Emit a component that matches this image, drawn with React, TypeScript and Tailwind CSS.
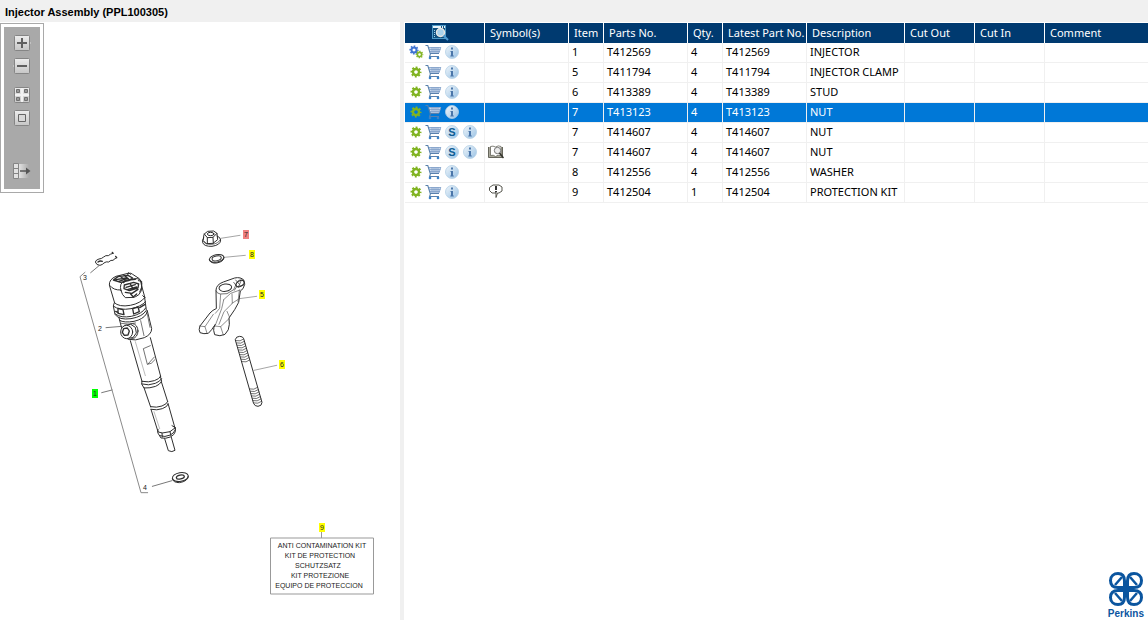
import type { ReactNode } from "react";

type Part = {
  item: string;
  partNo: string;
  qty: string;
  description: string;
  symbol?: "book" | "note";
  assembly?: boolean;
  service?: boolean;
  selected?: boolean;
};

const parts: Part[] = [
  { item: "1", partNo: "T412569", qty: "4", description: "INJECTOR", assembly: true },
  { item: "5", partNo: "T411794", qty: "4", description: "INJECTOR CLAMP" },
  { item: "6", partNo: "T413389", qty: "4", description: "STUD" },
  { item: "7", partNo: "T413123", qty: "4", description: "NUT", selected: true },
  { item: "7", partNo: "T414607", qty: "4", description: "NUT", service: true },
  { item: "7", partNo: "T414607", qty: "4", description: "NUT", service: true, symbol: "book" },
  { item: "8", partNo: "T412556", qty: "4", description: "WASHER" },
  { item: "9", partNo: "T412504", qty: "1", description: "PROTECTION KIT", symbol: "note" },
];

const columns: { name: string; width: string }[] = [
  { name: "Symbol(s)", width: "w-[84px]" },
  { name: "Item", width: "w-[35px]" },
  { name: "Parts No.", width: "w-[84px]" },
  { name: "Qty.", width: "w-[35px]" },
  { name: "Latest Part No.", width: "w-[84px]" },
  { name: "Description", width: "w-[98px]" },
  { name: "Cut Out", width: "w-[70px]" },
  { name: "Cut In", width: "w-[70px]" },
  { name: "Comment", width: "w-auto" },
];

const kitLines = [
  { text: "ANTI CONTAMINATION KIT", x: 322, y: 548 },
  { text: "KIT DE PROTECTION", x: 320, y: 558 },
  { text: "SCHUTZSATZ", x: 318, y: 568 },
  { text: "KIT PROTEZIONE", x: 320, y: 578 },
  { text: "EQUIPO DE PROTECCION", x: 319, y: 588 },
];

const callouts = [
  { n: "1", x: 92, y: 389, fill: "#00ff00" },
  { n: "7", x: 243, y: 230, fill: "#f08080" },
  { n: "8", x: 249, y: 250, fill: "#ffff00" },
  { n: "5", x: 259, y: 290, fill: "#ffff00" },
  { n: "6", x: 279, y: 360, fill: "#ffff00" },
  { n: "9", x: 319, y: 523, fill: "#ffff00" },
];

const GearShape = ({ color }: { color: string }) => (
  <>
    <circle r="3" fill="none" stroke={color} strokeWidth="2.4" />
    <circle r="4.6" fill="none" stroke={color} strokeWidth="1.8" strokeDasharray="1.9 1.71" strokeDashoffset="0.9" />
  </>
);

const GearIcon = ({ assembly }: { assembly?: boolean }) => (
  <svg width="16" height="16" viewBox="0 0 16 16" className="shrink-0">
    {assembly ? (
      <>
        <g transform="translate(6 6) scale(.84)">
          <GearShape color="#3f74d1" />
        </g>
        <g transform="translate(11.500 10.500) scale(.7)">
          <GearShape color="#84b526" />
        </g>
      </>
    ) : (
      <g transform="translate(8 8)">
        <GearShape color="#80b321" />
      </g>
    )}
  </svg>
);

const CartIcon = () => (
  <svg width="17" height="16" viewBox="0 0 17 16">
    <path d="M3.500 3h12.500l-2 6H5.500z" fill="#c8d8ec" />
    <path d="M3.500 3.500h12.500M4.500 5.500h11M5 7.500h10M7 3v6M9 3v6M11 3v6M13 3v6M15.800 3.500l-1.800 5.500" stroke="#7c9cc6" strokeWidth=".7" fill="none" />
    <path d="M.5 1.500h2.300l2.600 8.500-.8 2.500h9.400M5.300 9.500h8.700" stroke="#5880ad" strokeWidth="1.100" fill="none" />
    <circle cx="5" cy="14" r="1.300" fill="#3b82c8" />
    <circle cx="13" cy="14" r="1.300" fill="#3b82c8" />
  </svg>
);

const RoundIcon = ({ letter }: { letter: "i" | "S" }) => (
  <svg width="14" height="14" viewBox="0 0 14 14">
    <defs>
      <linearGradient id="disc" x1="0" y1="0" x2="1" y2="1">
        <stop offset="0" stopColor="#f2f7fb" />
        <stop offset="1" stopColor="#98c1e4" />
      </linearGradient>
    </defs>
    <circle cx="7" cy="7" r="6.500" fill="url(#disc)" stroke="#b3cfe6" strokeWidth=".8" />
    {letter === "i" ? (
      <path d="M6 2.500h2v2H6zM5.500 6H8v4.500h.8v1H5.300v-1H6V7h-.5z" fill="#4a76aa" />
    ) : (
      <text x="7" y="11" textAnchor="middle" fontSize="11" fontWeight="700" fill="#0d5c94" fontFamily="Liberation Sans, sans-serif">
        S
      </text>
    )}
  </svg>
);

const SearchIcon = () => (
  <svg width="17" height="16" viewBox="0 0 17 16">
    <rect x=".5" y=".5" width="13" height="13" fill="#10507f" stroke="#4f9bc8" />
    <path d="M1 2h12" stroke="#e8f4fb" strokeWidth="2" strokeDasharray="8 1 1 1" />
    <path d="M2.500 5v8" stroke="#9fd0ec" strokeDasharray="1 1" />
    <circle cx="8.500" cy="7.500" r="4" fill="#a9d2ec" stroke="#e9e6e2" strokeWidth="1.500" />
    <path d="M11.500 10.500l4.500 4.500" stroke="#4d9bd4" strokeWidth="2" />
  </svg>
);

const BookIcon = () => (
  <svg width="16" height="14" viewBox="0 0 16 14" fill="none">
    <path d="M.5 2v10.500h14V2" fill="#aaa99c" stroke="#66665c" />
    <path d="M2.500 1.500q2.500-1 5 .5 3-2 5.500-.5v9q-3-1-5.500 1-2-2-5-1z" fill="#fff" stroke="#66665c" strokeWidth=".8" />
    <circle cx="9.500" cy="5.500" r="3.200" fill="#ececec" stroke="#777" />
    <path d="M11.500 8l4 5" stroke="#33332c" strokeWidth="1.500" />
  </svg>
);

const NoteIcon = () => (
  <svg width="16" height="15" viewBox="0 0 16 15" fill="none">
    <path d="M5 1h6l3 2v4l-3 2H9.500L8 13.500V9H4L1.500 6.500V3.500z" fill="#fff" stroke="#55554c" />
    <path d="M8 2v4M8 7v1.500" stroke="#111" strokeWidth="1.700" />
  </svg>
);

const ToolButton = ({ label, className = "", children }: { label: string; className?: string; children: ReactNode }) => (
  <button type="button" aria-label={label} title={label} className={`block h-4 w-[18px] ${className}`}>
    <svg width="18" height="16" viewBox="0 0 18 16">
      <defs>
        <linearGradient id="face" x1="0" y1="0" x2="0" y2="1">
          <stop offset="0" stopColor="#ededed" />
          <stop offset="1" stopColor="#c6c6c6" />
        </linearGradient>
      </defs>
      {children}
    </svg>
  </button>
);

const Face = () => <rect x="1.500" y=".5" width="15" height="15" rx="1" fill="url(#face)" stroke="#858585" />;

const Toolbar = () => (
  <div className="w-[44px] border border-[#a9a9a9] p-[3px]">
    <div className="flex flex-col items-center bg-[#a9a9a9] pt-2 pb-[10px]">
      <ToolButton label="Zoom in">
        <path d="M15 5l3 3-3 3z" fill="#dedede" />
        <Face />
        <path d="M4 8h10M9 3v10" stroke="#606060" strokeWidth="2" />
      </ToolButton>
      <ToolButton label="Zoom out" className="mt-[7px]">
        <path d="M3 5L0 8l3 3z" fill="#dedede" />
        <Face />
        <path d="M4 8h10" stroke="#606060" strokeWidth="2" />
      </ToolButton>
      <ToolButton label="Tile" className="mt-[13px]">
        <Face />
        <path d="M9 1v14M2 8h14" stroke="#f2f2f2" strokeWidth="2" />
        <path d="M3.500 2.500h3v3h-3zM11.500 2.500h3v3h-3zM3.500 10.500h3v3h-3zM11.500 10.500h3v3h-3z" fill="#9a9a9a" stroke="#707070" />
      </ToolButton>
      <ToolButton label="Fit to window" className="mt-[7px]">
        <Face />
        <path d="M5.500 4.500h7v7h-7z" fill="#d9d9d9" stroke="#666" />
      </ToolButton>
      <ToolButton label="Hide panel" className="mt-[37px]">
        <defs>
          <linearGradient id="fade">
            <stop offset="0" stopColor="#e2e2e2" />
            <stop offset="1" stopColor="#a9a9a9" />
          </linearGradient>
        </defs>
        <path d="M6 1h10v14H6z" fill="url(#fade)" />
        <path d="M.5.500h5v15h-5z" fill="#e2e2e2" stroke="#858585" />
        <path d="M1 5.500h4M1 10.500h4" stroke="#858585" />
        <path d="M7 8h8" stroke="#555" strokeWidth="1.500" />
        <path d="M13 4.500L17.500 8 13 11.500z" fill="#555" />
      </ToolButton>
    </div>
  </div>
);

const Illustration = () => (
  <svg width="400" height="427" viewBox="0 193 400 427" className="block" fontFamily="Liberation Sans, Arial, sans-serif" fontSize="7" fill="#222">
    {/* Injector with clip and seat washer */}
    <g transform="translate(70 240) scale(.33333)" fill="none" stroke="#2e2e2e" strokeWidth="3" strokeLinejoin="round" strokeLinecap="round">
      <path d="M45 97L30 110 213 758h20" stroke="#8a8a8a" />
      <path d="M62 98l24-20M108 263l48-4M95 458l31-8M247 739l59-17" stroke="#777" />
      <path d="M129 40q-9 2-14 7-8-2-14 4-7 6-14 6-9 2-11 9 3 10 14 10 8-2 12-7 6-5 14-3 7-7 13-5 6-6 11-8" />
      <path d="M84 66q6-5 13-2M129 40l-2-3M140 53l-3-4" strokeWidth="4" />
      {/* connector cap */}
      <path d="M118 134q-1-16 20-25l36-9q10-2 14 3l20 13q5 5 6 18l11 40q-20 17-50 22-27 4-40-6z" fill="#fff" />
      <path d="M120 137q10 14 32 13M153 152q-7-23 12-30l30-6q17-2 20 14l-1 22q-5 14-20 20l-28 1q-10-8-13-21z" />
      <path d="M130 120l14-10 30-4 14 8-12 8-24 5zM138 119l30-5M150 108l15 13M162 106l14 11M146 124l28-9" strokeWidth="4" />
      <path d="M163 135l28-8 15 5-2 12-26 8-16-6zM168 142l28-8M172 149l28-8M180 130l10 18M166 157l20 3 18-12M182 162l8 9 10-9M160 128l8-7 28-3" strokeWidth="4" />
      <path d="M173 105l2-7 7 5M205 122l10 2v18l-6 14" />
      {/* collar */}
      <path d="M133 188l-3 10 5 25q12 18 48 13 35-6 46-25l-5-38-6-6" fill="#fff" />
      <path d="M133 188q14 14 48 8 31-6 44-24M131 199q17 13 52 7 30-6 44-21M136 222q17 13 48 7 32-7 43-25" />
      <path d="M144 205l15 4 3 15-18-4zM188 206l16-5 4 14-17 7zM137 214l8 4M209 203l15-9" strokeWidth="4" />
      <path d="M147 233l2 8q13 8 43 3 27-6 37-22l3-10M149 241l7 28M232 213l13 53q0 17-22 27-27 11-49 5" />
      <path d="M153 250q20 5 44-1M212 242l10 45M232 222l8 40" stroke="#777" />
      {/* inlet fitting */}
      <ellipse cx="188" cy="273" rx="16" ry="22" fill="#fff" />
      <path d="M164 256l18-3 14 9 3 17-10 14-18 2z" fill="#fff" />
      <ellipse cx="170" cy="276" rx="18" ry="20" fill="#fff" />
      <path d="M161 266l11-2 6 9-4 12-11 1-6-9z" strokeWidth="4" />
      {/* barrel */}
      <path d="M181 302l35 122M241 293l31 116" />
      <path d="M196 305l30 102" stroke="#bbb" />
      <path d="M241 317l-21 9 12 47q12 1 23-14M234 372l19-21" strokeWidth="2" />
      <path d="M216 424l-1 8 7 12q18 1 35-5 12-5 18-15l-4-15M216 424q20 4 37-2 15-5 19-13M216 432q20 6 40-2 15-6 19-14" />
      <path d="M222 443l20 58M274 425l19 60M242 500q18 4 34-2 15-6 17-13M243 508q18 4 34-2 16-6 17-13M243 508l21 67M294 490l22 78" />
      <path d="M264 568l-1 10 10 16q14 3 28-3 12-6 15-16v-12l-10-6M265 576l12 3 23-4 16-12M269 587q16 6 32-2 10-5 14-14M276 579l1 12M300 575l3 13" />
      <path d="M284 596l11 36q11 6 20-1l-11-39" />
      <path d="M252 515l17 51" stroke="#bbb" />
      <ellipse cx="331" cy="711" rx="24" ry="13" transform="rotate(-10 331 711)" />
      <path d="M307 716q2 12 21 12 26-4 27-19" />
      <ellipse cx="331" cy="711" rx="12" ry="6" transform="rotate(-12 331 711)" strokeWidth="4" />
    </g>

    {/* Nut, washer, clamp and stud */}
    <g transform="translate(190 220) scale(.33333)" fill="none" stroke="#2e2e2e" strokeWidth="3" strokeLinejoin="round" strokeLinecap="round">
      <path d="M92 55l58-9M103 112l63-6M148 236l52-7M192 451l68-15" stroke="#777" strokeWidth="2" />
      <path d="M41 54q-5 7-3 14 5 12 28 11 26-4 26-19-1-9-11-12" fill="#fff" />
      <path d="M43 42l10-8 18-1 10 7 2 19-14 11-20 1-9-9zM43 42l9 11 17-1 12-12M52 53v18M69 52l1 18" />
      <ellipse cx="62" cy="42" rx="10" ry="5" />
      <path d="M38 63q9 12 28 10 19-2 25-14" strokeWidth="2" />
      <ellipse cx="80" cy="115" rx="22" ry="11" transform="rotate(-12 80 115)" />
      <ellipse cx="80" cy="115" rx="14" ry="7" transform="rotate(-12 80 115)" />
      <path d="M58 120q4 11 22 9 22-4 22-16" />
      {/* clamp */}
      <path d="M78 210q0-16 22-24l34-12q18-4 28 7 6 11-3 25l-8 7-5 34-12 22-17 25 1 19q0 18-13 30-15 8-31 1l-3-13q-1-8 5-18-12 19-21 27-14 3-25-2-5-9 0-20l30-39q8-9 18-13z" fill="#fff" />
      <ellipse cx="106" cy="203" rx="19" ry="11" transform="rotate(-8 106 203)" />
      <path d="M78 212q2 9 13 10l20-1 20-12 11-24q5-8 19-4" strokeWidth="2" />
      <ellipse cx="150" cy="191" rx="13" ry="8" transform="rotate(-30 150 191)" />
      <path d="M131 187l10 13 20-5M141 199l-8 12M137 180l11 13M153 183l-8 19" strokeWidth="2" />
      <path d="M92 223l-3 42-13 15M100 240l22-20 28-10M101 240l-6 26-18 47M126 222l1 28-25 25-15 38M126 250l22-14M118 290l-7-16M28 318l17 2 25-37M45 320l6 20M74 318l18 2 25-24M92 320l8 25M148 210l-4 36" stroke="#555" strokeWidth="2" />
      {/* stud */}
      <path d="M136 358q2-9 13-9 10 0 12 7l55 191q0 11-12 12-10 0-13-8z" fill="#fff" />
      <path d="M138 362q13 4 23-5M140 369q13 4 23-5M142 376q13 4 23-5M144 383q13 4 23-5M146 390q13 4 23-5M148 397q13 4 23-5M150 404q13 4 23-5M152 411q13 4 23-5M154 418q13 4 23-5M156 425q13 4 23-5M179 507q13 4 24-5M181 514q13 4 24-5M183 521q13 4 24-5M185 528q13 4 24-5M187 535q13 4 24-5M189 542q13 4 24-5M191 549q13 4 24-5" strokeWidth="2" />
    </g>

    <text x="83" y="280">3</text>
    <text x="98" y="331">2</text>
    <text x="143" y="490">4</text>
    {callouts.map((c) => (
      <g key={c.n}>
        <rect x={c.x} y={c.y} width="6" height="9" fill={c.fill} />
        <text x={c.x + 3} y={c.y + 7} textAnchor="middle">
          {c.n}
        </text>
      </g>
    ))}

    <path d="M321.500 532v6M270.500 538h103v56h-103z" fill="none" stroke="#999" />
    {kitLines.map((line) => (
      <text key={line.text} x={line.x} y={line.y} textAnchor="middle">
        {line.text}
      </text>
    ))}
  </svg>
);

const Logo = () => (
  <div className="mt-auto mr-1 flex flex-col items-center gap-px self-end text-[#0b559f]">
    <svg width="36" height="36" viewBox="0 0 36 36" fill="none" stroke="currentColor" strokeWidth="3">
      <path d="M16.500 16V10C16.500 5 14 2.500 10 2.500S2.500 5 2.500 9.500 5 16.500 10 16.500h16c5 0 7.500-2.500 7.500-7S30 2.500 26 2.500 19.500 5 19.500 10v16c0 5 2.500 7.500 6.500 7.500s7.500-2.500 7.500-7-2.500-7-7.500-7H10c-5 0-7.500 2.500-7.500 7s3.500 7 7.500 7 6.500-2.500 6.500-7.500V16" />
      <path d="M7 14l7-8M29 14l-7-8M7 22l7 8M29 22l-7 8" strokeWidth="2.500" />
    </svg>
    <span className="font-['Liberation_Sans',Arial,sans-serif] text-[10px] leading-3 font-bold">Perkins</span>
  </div>
);

const PartRow = ({ part }: { part: Part }) => {
  const cell = "h-5 border-r border-b border-[#f0f0f0] pb-[2px] pl-[3px] last:border-r-0";
  return (
    <tr className={part.selected ? "bg-[#0078d7] text-white" : "text-black"}>
      <td className={cell}>
        <div className="flex h-4 items-center">
          <GearIcon assembly={part.assembly} />
          <button type="button" aria-label="Add to cart" className="ml-px">
            <CartIcon />
          </button>
          {part.service && (
            <button type="button" aria-label="Service" className="ml-[3px]">
              <RoundIcon letter="S" />
            </button>
          )}
          <button type="button" aria-label="Information" className={part.service ? "ml-1" : "ml-[3px]"}>
            <RoundIcon letter="i" />
          </button>
        </div>
      </td>
      <td className={cell}>
        {part.symbol === "book" && <BookIcon />}
        {part.symbol === "note" && <NoteIcon />}
      </td>
      <td className={cell}>{part.item}</td>
      <td className={cell}>{part.partNo}</td>
      <td className={cell}>{part.qty}</td>
      <td className={cell}>{part.partNo}</td>
      <td className={cell}>{part.description}</td>
      <td className={cell}></td>
      <td className={cell}></td>
      <td className={cell}></td>
    </tr>
  );
};

const App = () => {
  return (
    <div className="flex min-h-screen flex-col bg-white font-['Noto_Sans','Open_Sans',sans-serif] text-[11px] leading-4 text-black">
      <header className="bg-[#f0f0f0] px-[5px] pt-1 pb-[2px]">
        <h1 className="font-['Liberation_Sans',Arial,sans-serif] font-bold">Injector Assembly (PPL100305)</h1>
      </header>
      <main className="flex grow">
        {/* Drawing */}
        <section className="w-[400px] shrink-0 pt-px">
          <Toolbar />
          <Illustration />
        </section>
        <div className="w-1 shrink-0 bg-[#f0f0f0]"></div>
        {/* Parts list */}
        <section className="flex min-w-0 grow flex-col pt-px pl-px">
          <table className="w-full table-fixed border-separate border-spacing-0 whitespace-nowrap">
            <thead>
              <tr className="bg-[#003a70] text-white">
                <th className="h-5 w-[80px] border-r border-white">
                  <button type="button" aria-label="Search" className="mx-auto block pr-2">
                    <SearchIcon />
                  </button>
                </th>
                {columns.map((col) => (
                  <th key={col.name} className={`h-5 border-r border-white pl-[5px] text-left font-normal last:border-r-0 ${col.width}`}>
                    {col.name}
                  </th>
                ))}
              </tr>
            </thead>
            <tbody>
              {parts.map((part, index) => (
                <PartRow key={index} part={part} />
              ))}
            </tbody>
          </table>
          <Logo />
        </section>
      </main>
    </div>
  );
};

export default App;
